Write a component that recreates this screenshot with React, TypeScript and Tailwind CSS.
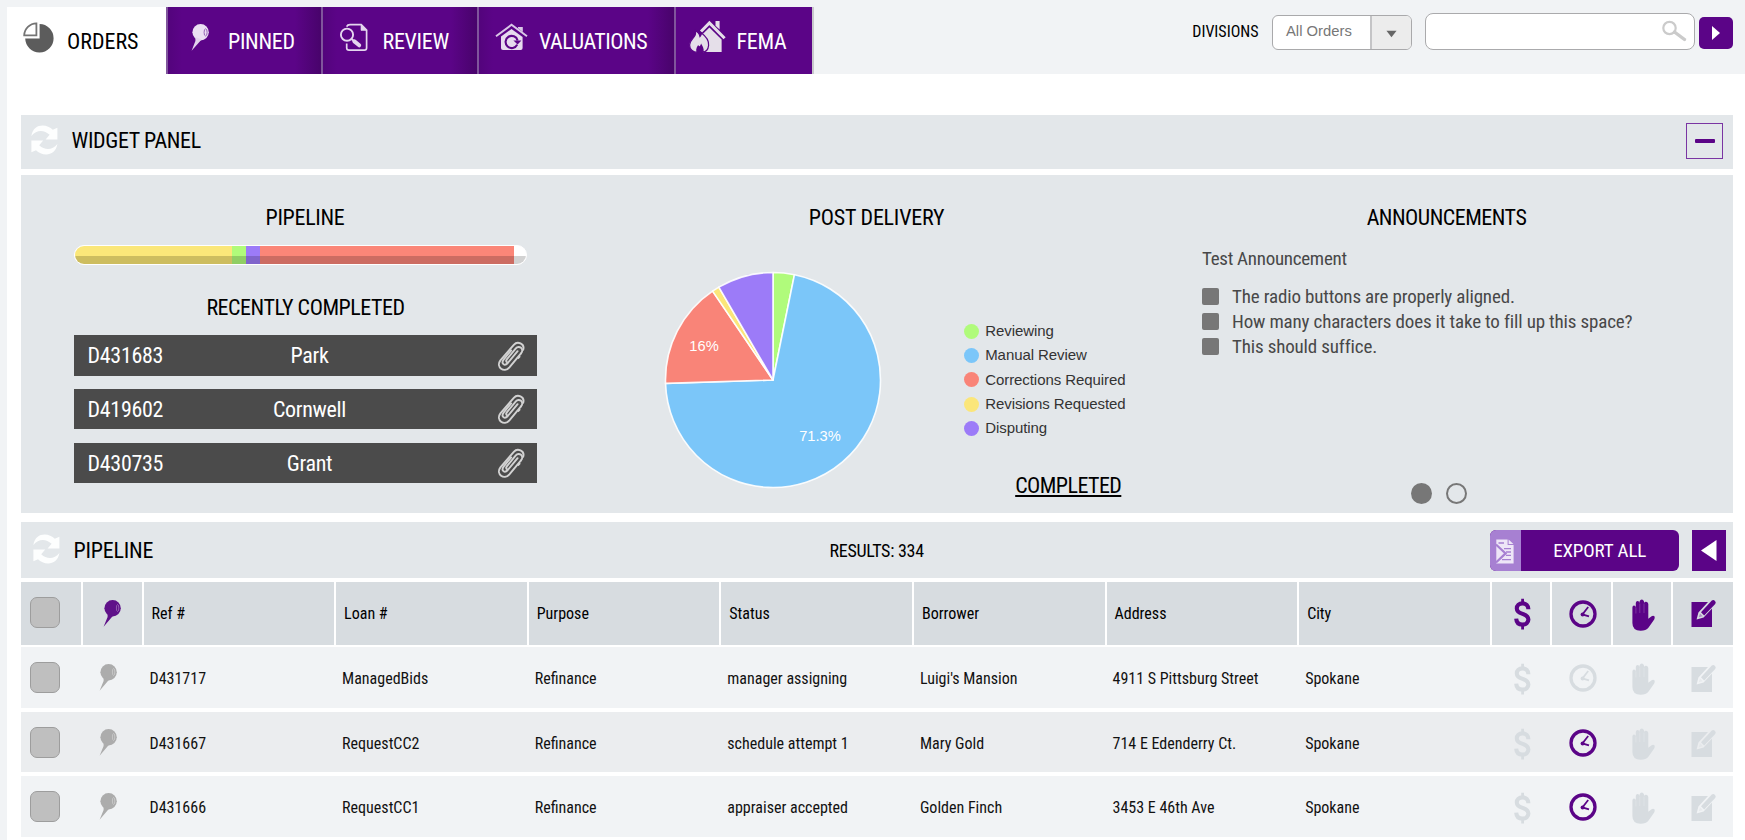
import React from "react";

type IconProps = { className?: string };

function PieIcon() {
  return (
    <svg width="32" height="32" viewBox="0 0 32 32" className="block">
      <path d="M17.6 3 A14.2 14.2 0 1 1 3.2 17.6 H17.6 Z" fill="#5c5c5c" />
      <path d="M14.4 14.4 V2.4 A12.4 12.4 0 0 0 2.2 14.4 Z" fill="#fff" stroke="#747474" strokeWidth="1.8" />
    </svg>
  );
}

function PinIcon({ className }: IconProps) {
  return (
    <svg width="18" height="27" viewBox="0 0 18 27" className={className}>
      <circle cx="9.6" cy="8.3" r="8.2" fill="currentColor" />
      <path d="M4.6 13 L4.6 17 L0.6 26.8 L10.2 15.5 Z" fill="currentColor" />
      <ellipse cx="14.6" cy="8" rx="1.2" ry="3.4" fill="none" stroke="#fff" strokeOpacity="0.4" strokeWidth="0.8" />
    </svg>
  );
}

function TabPinIcon() {
  return (
    <svg width="18" height="27" viewBox="0 0 18 27" className="block">
      <circle cx="9.6" cy="8.3" r="8.2" fill="#ebdff3" />
      <path d="M4.4 13 L4.4 17 L0.6 26.8 L10.6 15.5 Z" fill="#e2d2ed" />
      <ellipse cx="14.6" cy="8.4" rx="1.5" ry="3.6" fill="none" stroke="#8f57b0" strokeWidth="0.9" />
    </svg>
  );
}

function ReviewIcon() {
  return (
    <svg width="30" height="30" viewBox="0 0 30 30" className="block" fill="none" stroke="#e4d6ee">
      <path d="M7.6 3.6 Q8.6 1.6 11 1.6 H22.2 L27.6 7.2 V25 Q27.6 27.2 25.4 27.2 H10 Q7.7 27.2 7.7 25 V20.5" strokeWidth="1.7" />
      <path d="M22 1.8 V7.4 H27.6 Z" fill="#e4d6ee" strokeWidth="0.6" />
      <circle cx="8" cy="11.7" r="6.1" strokeWidth="1.9" />
      <path d="M12.6 16 L16 19" strokeWidth="2" />
      <path d="M15.4 18.4 L20.2 22.3" strokeWidth="4" strokeLinecap="round" />
    </svg>
  );
}

function ValuationIcon() {
  return (
    <svg width="33" height="29" viewBox="0 0 33 29" className="block">
      <path d="M1 13.3 L16.5 1.8 L32 13.3" fill="none" stroke="#d9c8e6" strokeWidth="2" />
      <path d="M23 5.2 V4 H27.8 V9 Z" fill="#d9c8e6" />
      <path d="M6 13.6 L16.5 6 L27.6 14 V25 Q27.6 27 25.6 27 H8 Q6 27 6 25 Z" fill="#e6daee" />
      <path d="M22.2 21.6 A6.1 6.1 0 1 1 22.6 17.4" fill="none" stroke="#5b0487" strokeWidth="2.1" />
      <path d="M18.4 17.4 H26.4 L22.6 21.6 Z" fill="#5b0487" />
    </svg>
  );
}

function FemaIcon() {
  return (
    <svg width="37" height="34" viewBox="0 0 37 34" className="block">
      <path d="M26.5 1 H30.6 V9.5 L26.5 5.8 Z" fill="#e5dfe9" />
      <path d="M12 11.5 L20.4 3 L35.6 18.2" fill="none" stroke="#e5dfe9" strokeWidth="3" />
      <path d="M13 14.8 L20.4 7.6 L32.6 19.4 V32 H15 Z" fill="#e5dfe9" />
      <path
        d="M6.2 10.4 C9 12 10.6 14 11 16.6 C12 15.8 12.4 14.4 12.4 13 C16 15.6 20 20.6 19.6 25.4 C19.2 29.4 16.8 32 13.6 32.4 C15 29.4 13.6 27.6 12.2 25 C11.4 27 10.2 27.4 9.2 26 C7.6 28.4 7.4 30.2 8.4 32.4 C3.8 32.2 0.6 29.2 0.6 25 C0.6 21.4 3 19.6 5 17 C6.6 15 7 13 6.2 10.4 Z"
        fill="#e5dfe9"
        stroke="#5b0487"
        strokeWidth="1.2"
      />
    </svg>
  );
}

function RefreshIcon() {
  const arrow = "M0.4 11 C1.6 3.6 6.4 0.6 11.6 0.6 C15.6 0.6 19.2 2.2 21.8 4.8 L26.4 2.8 V14.4 H14.6 L18.6 9.8 C13 4.4 5.4 4.6 0.4 11 Z";
  return (
    <svg width="27" height="30" viewBox="0 0 27 30" className="block shrink-0" fill="#fdfefe">
      <path d={arrow} />
      <path d={arrow} transform="rotate(180 13.4 15)" />
    </svg>
  );
}

function ClipIcon() {
  return (
    <svg width="28" height="31" viewBox="0 0 28 31" className="block" fill="none" stroke="#d2d2d2" strokeWidth="1.9" strokeLinecap="round">
      <path d="M14.2 9.4 L6.8 18.4 C3.6 22.6 7.6 25.6 10.8 22 L20.6 10.2" />
      <path d="M10.2 21.4 C8.4 20.6 9.2 19 10.4 17.6 L18.8 7.4 C22 3.6 27.8 8 24 12.4" />
      <path d="M24 12.4 L12.4 26.4 C7.2 32.4 -1.6 26.2 3.4 19.4 L16.8 3.8 C20.4 -0.4 28 2.4 26.2 8.8" />
      <path d="M22.6 15.6 L21.4 17" />
    </svg>
  );
}

function DollarIcon({ className }: IconProps) {
  return (
    <svg width="17" height="32" viewBox="0 0 17 32" className={className} fill="none" stroke="currentColor">
      <path d="M14.4 11.2 C14.4 7.6 12 5.4 8.6 5.4 C5 5.4 2.8 7.6 2.8 10.4 C2.8 13.6 5.4 14.8 8.6 15.9 C12 17 14.4 18.4 14.4 21.6 C14.4 24.6 12 26.6 8.6 26.6 C4.8 26.6 2.4 24.4 2.2 20.6" strokeWidth="4.1" />
      <path d="M8.6 0.8 V5 M8.6 27 V31.4" strokeWidth="2.8" />
    </svg>
  );
}

function ClockIcon({ className }: IconProps) {
  return (
    <svg width="28" height="28" viewBox="0 0 28 28" className={className} fill="none" stroke="currentColor">
      <circle cx="14" cy="14" r="12" strokeWidth="3.3" />
      <path d="M19.2 7 L13.4 14.4 L20 16.4" strokeWidth="1.8" />
      <circle cx="13.6" cy="14.4" r="2" fill="currentColor" stroke="none" />
    </svg>
  );
}

function HandIcon({ className }: IconProps) {
  return (
    <svg width="23" height="32" viewBox="0 0 23 32" className={className}>
      <path
        d="M0.4 8.6 Q0.5 6.6 2 6.6 Q3.6 6.6 3.8 8.6 V4 Q4 2 5.6 2 Q7.2 2 7.5 4 V2.4 Q8.3 0.4 9.8 0.4 Q11.3 0.4 12 2.4 V4 Q12.6 2.6 14.2 2.8 Q16.2 3 16.3 5 V19.8 L19.6 17.2 Q21.4 16 22.6 17.6 Q23 19.2 22.2 20.4 L16.6 28.6 Q14 31.8 8.6 31.8 Q0.4 31.6 0.4 24 Z"
        fill="currentColor"
      />
      <path d="M3.9 8.5 V14.5 M7.8 4.5 V14 M12 4.5 V14" stroke="#fff" strokeOpacity="0.28" strokeWidth="0.7" />
    </svg>
  );
}

function EditIcon({ className }: IconProps) {
  return (
    <svg width="26" height="29" viewBox="0 0 26 29" className={className}>
      <path d="M0.5 3 H17 L7.4 13.6 L5.6 20.4 L12.6 18.4 L21 9.4 V28 H0.5 Z" fill="currentColor" />
      <path d="M10 13.2 L20.8 1.6 Q22.4 0.4 24 2 Q25.4 3.6 24.2 5 L13.2 16.6 Z" fill="currentColor" />
      <path d="M7.8 18.2 L9 14.4 L11.8 17.2 Z" fill="currentColor" fillOpacity="0.35" />
    </svg>
  );
}

function ExportIcon() {
  return (
    <svg width="18" height="25" viewBox="0 0 18 25" className="block">
      <path d="M0.3 0.5 H11.6 V6 H17.6 V24.5 H0.3 Z" fill="#eee6f7" />
      <path d="M12.6 0.5 L17.4 5 H12.6 Z" fill="#eee6f7" />
      <path d="M2.5 4 H8 M8 9.6 H15 M10 13 H15 M10 16.4 H15 M6 20.6 H15" stroke="#a780d2" strokeWidth="1.3" />
      <path d="M0 5.5 L9.6 14.4 L0 23.5" fill="none" stroke="#a780d2" strokeWidth="2.2" />
    </svg>
  );
}

const slices = [
  { name: "Reviewing", value: 3.2, color: "#b0fb7b", dot: "bg-[#b0fb7b]" },
  { name: "Manual Review", value: 71.3, color: "#7bc6f9", dot: "bg-[#7bc6f9]" },
  { name: "Corrections Required", value: 16, color: "#f98478", dot: "bg-[#f98478]" },
  { name: "Revisions Requested", value: 1.1, color: "#fbe67a", dot: "bg-[#fbe67a]" },
  { name: "Disputing", value: 8.4, color: "#9c7bf8", dot: "bg-[#9c7bf8]" },
];

function PieChart() {
  const c = 109;
  const r = 107.5;
  let sum = 0;
  const point = (v: number) => {
    const a = (v / 100) * Math.PI * 2;
    return `${(c + r * Math.sin(a)).toFixed(2)} ${(c - r * Math.cos(a)).toFixed(2)}`;
  };
  return (
    <svg width="218" height="218" viewBox="0 0 218 218" className="block shrink-0">
      {slices.map((s) => {
        const from = point(sum);
        sum += s.value;
        return (
          <path
            key={s.name}
            d={`M${c} ${c} L${from} A${r} ${r} 0 ${s.value > 50 ? 1 : 0} 1 ${point(sum)} Z`}
            fill={s.color}
            stroke="#fff"
            strokeOpacity="0.9"
            strokeWidth="1.6"
            strokeLinejoin="round"
          />
        );
      })}
      <g fill="#fff" textAnchor="middle" className="font-['Liberation_Sans',sans-serif] text-[14.7px]">
        <text x="40" y="80">16%</text>
        <text x="156" y="170">71.3%</text>
      </g>
    </svg>
  );
}

const tabs = [
  { label: "PINNED", icon: <TabPinIcon />, box: "w-[155.5px]", pad: "pl-[23px] pt-[17px]", text: "mt-[-16px] pl-[19.5px]", shade: true },
  { label: "REVIEW", icon: <ReviewIcon />, box: "w-[156px]", pad: "pl-[16px] pt-[16px]", text: "mt-[-15px] pl-[13.5px]", shade: true },
  { label: "VALUATIONS", icon: <ValuationIcon />, box: "w-[197px]", pad: "pl-[15.5px] pt-[15.5px]", text: "mt-[-15px] pl-[11.5px] tracking-[-0.45px]", shade: true },
  { label: "FEMA", icon: <FemaIcon />, box: "w-[138px]", pad: "pl-[12.5px] pt-[13px]", text: "mt-[-12px] pl-[11px]", shade: false },
];

const completed = [
  { id: "D431683", name: "Park" },
  { id: "D419602", name: "Cornwell" },
  { id: "D430735", name: "Grant" },
];

const columns = ["Ref #", "Loan #", "Purpose", "Status", "Borrower", "Address", "City"];

const orders = [
  { cells: ["D431717", "ManagedBids", "Refinance", "manager assigning", "Luigi's Mansion", "4911 S Pittsburg Street", "Spokane"], due: false },
  { cells: ["D431667", "RequestCC2", "Refinance", "schedule attempt 1", "Mary Gold", "714 E Edenderry Ct.", "Spokane"], due: true },
  { cells: ["D431666", "RequestCC1", "Refinance", "appraiser accepted", "Golden Finch", "3453 E 46th Ave", "Spokane"], due: true },
];

const grid = "grid grid-cols-[62px_61px_repeat(7,minmax(0,1fr))_60.6px_60.6px_60.4px_59.4px]";

function Checkbox() {
  return <span className="block h-[31px] w-[30px] rounded-[7px] border-[1.5px] border-[#9d9d9d] bg-[#bfbfbf]" />;
}

export default function App() {
  return (
    <div className="h-[840px] w-[1745px] overflow-hidden bg-[#f1f3f5] pl-[6.5px] font-['Roboto_Condensed',Roboto,sans-serif] text-black">
      <header className="flex h-[74px] justify-between pt-[7px]">
        <nav className="flex h-[67px] text-[22px] tracking-[-0.3px]">
          <a className="flex w-[159px] bg-white pl-[15.5px]">
            <span className="pt-[14px]"><PieIcon /></span>
            <span className="pl-[13px] leading-[69px] tracking-normal">ORDERS</span>
          </a>
          {tabs.map((t) => (
            <a
              key={t.label}
              className={`flex border-l-2 border-[#80559c] text-white ${t.box} ${t.pad} ${
                t.shade ? "bg-[linear-gradient(90deg,#53047c_0,#5b0487_14px,#5b0487_calc(100%-26px),#48036b_100%)]" : "bg-[#5b0487]"
              }`}
            >
              <span className="block">{t.icon}</span>
              <span className={`self-start leading-[68px] ${t.text}`}>{t.label}</span>
            </a>
          ))}
          <span className="w-[2px] bg-[#c9c9cc]" />
        </nav>

        <div className="flex pr-[12px]">
          <span className="pt-px text-[16px] leading-[48px]">DIVISIONS</span>
          <div className="ml-[13px] mt-2 flex h-[35px] w-[140px] overflow-hidden rounded-[6px] border border-[#a9a9ab] bg-white">
            <span className="w-[99px] border-r-2 border-[#c4c4c6] pl-[13.5px] font-['Liberation_Sans',sans-serif] text-[14.8px] leading-[31px] text-[#777]">All Orders</span>
            <span className="flex flex-1 items-center justify-center bg-[#ececec] pt-[3px]">
              <svg width="11" height="8" viewBox="0 0 12 8"><path d="M0.5 0.5 H11.5 L6 7.5 Z" fill="#666" /></svg>
            </span>
          </div>
          <div className="ml-[13px] mt-[6px] flex h-[37px] w-[270.5px] justify-end rounded-[8px] border border-[#aaaaac] bg-white pr-[7px] pt-[6px]">
            <svg width="26" height="22" viewBox="0 0 26 22" fill="none" stroke="#cbcbcb">
              <circle cx="8.5" cy="8" r="6.2" strokeWidth="2.2" />
              <path d="M13.5 12 L23.5 19.5" strokeWidth="3.4" strokeLinecap="round" />
            </svg>
          </div>
          <span className="ml-[4px] mt-[10px] flex h-[32px] w-[34px] items-center justify-center rounded-[5px] bg-[#5b0487] pr-px">
            <svg width="8" height="14" viewBox="0 0 8 14"><path d="M0 0 L8 7 L0 14 Z" fill="#fff" /></svg>
          </span>
        </div>
      </header>

      <main className="h-[766px] bg-white pl-[14px] pr-[12.3px] pt-[41px]">
        <section>
          <div className="flex h-[54px] items-start bg-[#e3e7ea] pl-[10.5px]">
            <span className="pt-[10px]"><RefreshIcon /></span>
            <h2 className="flex-1 pl-[13.5px] text-[22px] leading-[51px] tracking-[-0.35px]">WIDGET PANEL</h2>
            <span className="mr-[9.5px] mt-2 flex h-[36px] w-[37px] items-center justify-center border border-[#7a35a3]">
              <span className="h-[4.5px] w-5 rounded-[1px] bg-[#5b0487]" />
            </span>
          </div>

          <div className="mt-[6px] flex h-[338px] bg-[#e3e7ea]">
            <div className="w-[570px] pl-[53.5px] pt-[31px]">
              <h3 className="w-[462px] text-center text-[22px] leading-6 tracking-[-0.3px]">PIPELINE</h3>
              <div className="mt-[15px] flex h-[20px] w-[453px] overflow-hidden rounded-full border border-white bg-white">
                <span className="w-[156.5px] bg-[linear-gradient(#fbe779_0_10px,#cdbd5f_10px)]" />
                <span className="w-[14px] bg-[linear-gradient(#b0fb7a_0_10px,#90ce64_10px)]" />
                <span className="w-[14px] bg-[linear-gradient(#9c7bf8_0_10px,#8064cb_10px)]" />
                <span className="w-[254px] bg-[linear-gradient(#fb8678_0_10px,#cc6c62_10px)]" />
                <span className="flex-1 bg-[linear-gradient(#fff_0_10px,#d2d2d2_10px)]" />
              </div>
              <h3 className="mt-[31px] w-[463px] text-center text-[22px] leading-6 tracking-[-0.45px]">RECENTLY COMPLETED</h3>
              <ul className="mt-[15px] flex flex-col gap-[13.3px] text-[22px] tracking-[-0.3px] text-white">
                {completed.map((c) => (
                  <li key={c.id} className="grid h-[40.6px] w-[462.5px] grid-cols-[1fr_120px_1fr] items-center bg-[#4b4b4b] pl-[13.5px] pr-[12px]">
                    <span className="leading-[42px]">{c.id}</span>
                    <span className="pl-[7px] text-center leading-[42px]">{c.name}</span>
                    <span className="justify-self-end"><ClipIcon /></span>
                  </li>
                ))}
              </ul>
            </div>

            <div className="w-[570px] pt-[31px]">
              <h3 className="w-[572px] text-center text-[22px] leading-6 tracking-[-0.22px]">POST DELIVERY</h3>
              <div className="flex pl-[73.7px] pt-[41px]">
                <PieChart />
                <div className="pl-[82px]">
                  <ul className="flex flex-col pt-[48px] font-['Liberation_Sans',sans-serif] text-[15px] leading-[24.35px] text-[#333]">
                    {slices.map((s) => (
                      <li key={s.name} className="flex items-center gap-[6px] whitespace-nowrap">
                        <span className={`h-[15px] w-[15px] rounded-full ${s.dot}`} />
                        <span className="tracking-[-0.07px]">{s.name}</span>
                      </li>
                    ))}
                  </ul>
                  <a className="ml-[51px] mt-[33px] inline-block text-[22px] leading-6 tracking-[-0.55px] underline decoration-2 underline-offset-[2px]">COMPLETED</a>
                </div>
              </div>
            </div>

            <div className="flex-1 pl-[41.5px] pt-[31px]">
              <h3 className="w-[489px] text-center text-[22px] leading-6 tracking-[-0.5px]">ANNOUNCEMENTS</h3>
              <p className="mt-[17px] text-[19px] leading-6 tracking-[-0.28px] text-[#484848]">Test Announcement</p>
              <ul className="mt-[13px] text-[19px] leading-[25px] tracking-[-0.155px] text-[#484848]">
                {["The radio buttons are properly aligned.", "How many characters does it take to fill up this space?", "This should suffice."].map((t) => (
                  <li key={t} className="flex items-center gap-[13px]">
                    <span className="h-[17px] w-[17px] rounded-[2px] bg-[#777]" />
                    {t}
                  </li>
                ))}
              </ul>
              <div className="mt-[124px] flex gap-[14px] pl-[209px]">
                <span className="h-[21px] w-[21px] rounded-full bg-[#777]" />
                <span className="h-[21px] w-[21px] rounded-full border-2 border-[#777]" />
              </div>
            </div>
          </div>
        </section>

        <section className="mt-[9px]">
          <div className="grid h-[56px] grid-cols-[1fr_auto_1fr] bg-[#e3e7ea]">
            <div className="flex pl-[12px]">
              <span className="pt-[12px]"><RefreshIcon /></span>
              <h2 className="pl-[14px] text-[22px] leading-[58px] tracking-[-0.2px]">PIPELINE</h2>
            </div>
            <span className="text-[18px] leading-[57px] tracking-[-0.28px]">RESULTS: 334</span>
            <div className="flex justify-end gap-[13.5px] pr-[7px] pt-2">
              <button className="flex h-[41px] w-[189px] overflow-hidden rounded-[6px] bg-[#5b0487] text-white">
                <span className="flex h-full w-[31px] items-center justify-center bg-[#a780d2] pt-0.5"><ExportIcon /></span>
                <span className="flex-1 text-center text-[19px] leading-[42px] tracking-[-0.1px]">EXPORT ALL</span>
              </button>
              <span className="flex h-[41px] w-[33.5px] items-center justify-center bg-[#5b0487]">
                <svg width="16" height="21" viewBox="0 0 16 21"><path d="M15.5 0 V21 L0 10.5 Z" fill="#fff" /></svg>
              </span>
            </div>
          </div>

          <div className={`${grid} mt-1 h-[61px] text-[16px] leading-[63px]`}>
            <span className="mr-[2px] bg-[#d7dce0] pl-[9px] pt-[15px]"><Checkbox /></span>
            <span className="mr-[2px] bg-[#d7dce0] pl-[20.5px] pt-[18px] text-[#5f1189]"><PinIcon className="block" /></span>
            {columns.map((c) => (
              <span key={c} className="mr-[2px] bg-[#d7dce0] pl-[8px]">{c}</span>
            ))}
            <span className="mr-[2px] flex items-center bg-[#d7dce0] pl-[22.5px] text-[#5b0487]"><DollarIcon /></span>
            <span className="mr-[2px] flex items-center bg-[#d7dce0] pl-[16.5px] text-[#5b0487]"><ClockIcon /></span>
            <span className="mr-[2px] flex items-center bg-[#d7dce0] pl-[19px] pt-0.5 text-[#5b0487]"><HandIcon /></span>
            <span className="flex items-center bg-[#d7dce0] pl-[17.5px] text-[#5b0487]"><EditIcon /></span>
          </div>

          {orders.map((o, i) => (
            <div
              key={o.cells[0]}
              className={`${grid} text-[16px] leading-[63px] text-[#111] ${i === 1 ? "mt-1 h-[60px] bg-[#ebedef]" : "mt-1 h-[61px] bg-[#f1f3f5]"}`}
            >
              <span className="pl-[9px] pt-[15px]"><Checkbox /></span>
              <span className="pl-[16px] pt-[17px] text-[#acacac]"><PinIcon className="block" /></span>
              {o.cells.map((c, j) => (
                <span key={j} className="whitespace-nowrap pl-[6px]">{c}</span>
              ))}
              <span className="flex items-center pl-[22.5px] text-[#d7dce0]"><DollarIcon /></span>
              <span className={`flex items-center pb-px pl-[16.5px] ${o.due ? "text-[#5b0487]" : "text-[#d7dce0]"}`}><ClockIcon /></span>
              <span className="flex items-center pl-[19.5px] text-[#d7dce0]"><HandIcon /></span>
              <span className="flex items-center pb-px pl-[17.5px] text-[#d7dce0]"><EditIcon /></span>
            </div>
          ))}
        </section>
      </main>
    </div>
  );
}
